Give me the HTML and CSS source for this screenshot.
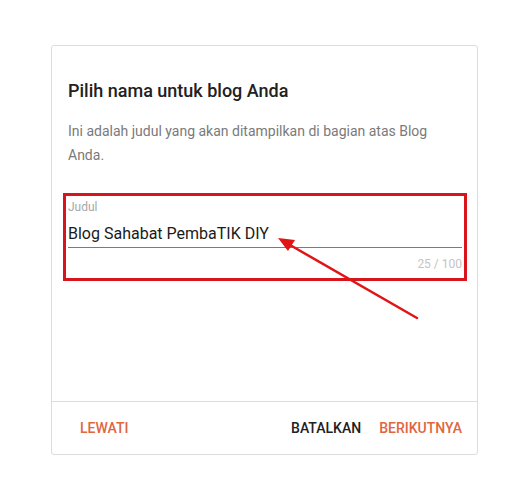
FILE: index.html
```html
<!DOCTYPE html>
<html lang="id">
<head>
<meta charset="utf-8">
<link rel="stylesheet" href="styles.css">
</head>
<body>
<div class="card">
  <div class="content">
    <h1 class="title">Pilih nama untuk blog Anda</h1>
    <p class="desc">Ini adalah judul yang akan ditampilkan di bagian atas Blog Anda.</p>
    <div class="field">
      <div class="label">Judul</div>
      <div class="value">Blog Sahabat PembaTIK DIY</div>
      <div class="counter">25 / 100</div>
    </div>
  </div>
  <div class="footer">
    <span class="btn accent">LEWATI</span>
    <div class="actions">
      <span class="btn">BATALKAN</span>
      <span class="btn accent">BERIKUTNYA</span>
    </div>
  </div>
</div>
<div class="highlight"></div>
<svg class="arrow" width="521" height="480" viewBox="0 0 521 480">
  <line x1="417" y1="318" x2="290" y2="245" stroke="#e01515" stroke-width="2.5" stroke-linecap="round"/>
  <polygon points="278,238 295,240 288,251" fill="#e01515"/>
</svg>
</body>
</html>
```
FILE: styles.css
```css
html, body {
  margin: 0;
  padding: 0;
  background: #ffffff;
}
body {
  font-family: Roboto, "Liberation Sans", sans-serif;
  position: relative;
  width: 521px;
  height: 480px;
  overflow: hidden;
}
.card {
  box-sizing: border-box;
  margin: 45px 0 0 51px;
  width: 427px;
  height: 410px;
  border: 1px solid #dcdcdc;
  border-radius: 3px;
  display: flex;
  flex-direction: column;
}
.content {
  flex: 1;
  padding: 33px 15px 0 16px;
}
.title {
  margin: 0;
  font-size: 18px;
  line-height: 24px;
  font-weight: 500;
  color: #212121;
}
.desc {
  margin: 16px 0 0;
  font-size: 14px;
  line-height: 24px;
  color: #7a7a7a;
}
.field {
  margin-top: 32px;
}
.label {
  font-size: 12px;
  line-height: 16px;
  color: #a8a8a8;
}
.value {
  margin-top: 7px;
  font-size: 16px;
  line-height: 24px;
  color: #1a1a1a;
  padding-bottom: 1px;
  border-bottom: 1px solid #d9583a;
}
.counter {
  margin-top: 8px;
  text-align: right;
  font-size: 12px;
  line-height: 16px;
  color: #c4c4c4;
}
.footer {
  height: 52px;
  border-top: 1px solid #dcdcdc;
  display: flex;
  align-items: center;
  justify-content: space-between;
  padding: 0 15px 0 28px;
}
.actions {
  display: flex;
  gap: 18px;
}
.btn {
  font-size: 14px;
  font-weight: 500;
  color: #212121;
}
.btn.accent {
  color: #e0663f;
}
.highlight {
  position: absolute;
  left: 63px;
  top: 193px;
  width: 404px;
  height: 88px;
  box-sizing: border-box;
  border: 3px solid #d8141c;
}
.arrow {
  position: absolute;
  left: 0;
  top: 0;
}
```
